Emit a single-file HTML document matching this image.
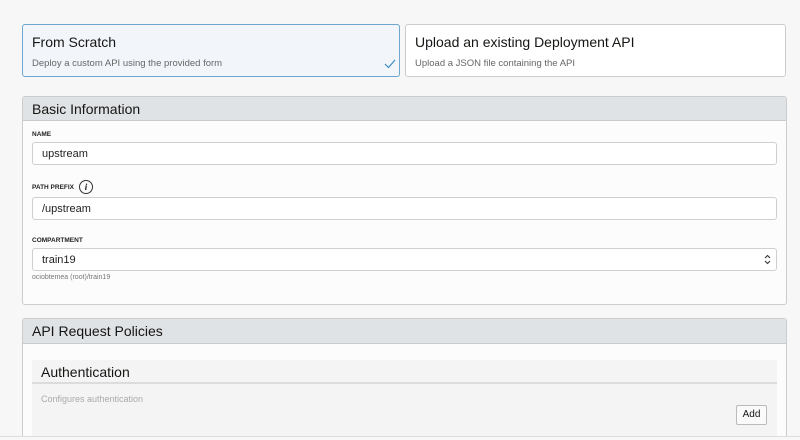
<!DOCTYPE html><html style="width:800px;height:440px;overflow:hidden"><head><style>
*{box-sizing:border-box;margin:0;padding:0}
body{width:800px;height:440px;background:#f7f7f7;font-family:"Liberation Sans",sans-serif;position:relative;overflow:hidden;color:#161513}
.a{position:absolute}
.card{border:1px solid #ccc;background:#fff;border-radius:3px}
.t{font-size:14px}
.s{font-size:9.5px;color:#666}
.lab{font-size:6.5px;font-weight:bold;color:#222}
.in{border:1px solid #cfcfcf;border-radius:3px;background:#fff;font-size:11px;padding:5px 0 0 9px;color:#222}
.hdr{background:#e0e3e5;border-bottom:1px solid #c9cccf;font-size:14px;padding:4px 0 0 9px}
</style></head><body>
<div class="a card" style="left:22px;top:24px;width:378px;height:53px;background:#f2f6fb;border-color:#6ea6cf">
 <div class="a t" style="left:9px;top:9px">From Scratch</div>
 <div class="a s" style="left:9px;top:33px">Deploy a custom API using the provided form</div>
 <svg class="a" style="left:361px;top:34px" width="12" height="10"><path d="M1 5 L4.5 8.5 L11 1" stroke="#3d8bc4" stroke-width="1.2" fill="none"/></svg>
</div>
<div class="a card" style="left:405px;top:24px;width:381px;height:53px">
 <div class="a t" style="left:9px;top:9px">Upload an existing Deployment API</div>
 <div class="a s" style="left:9px;top:33px">Upload a JSON file containing the API</div>
</div>
<div class="a card" style="left:22px;top:96px;width:765px;height:209px;overflow:hidden;background:#fcfcfc">
 <div class="hdr" style="height:24px">Basic Information</div>
 <div class="a lab" style="left:9px;top:34px">NAME</div>
 <div class="a in" style="left:9px;top:45px;width:745px;height:23px">upstream</div>
 <div class="a lab" style="left:9px;top:87px">PATH PREFIX</div>
 <div class="a" style="left:56px;top:83px;width:14px;height:14px;border:1px solid #333;border-radius:50%;font:italic bold 9px 'Liberation Serif',serif;text-align:center;line-height:12px">i</div>
 <div class="a in" style="left:9px;top:100px;width:745px;height:23px">/upstream</div>
 <div class="a lab" style="left:9px;top:140px">COMPARTMENT</div>
 <div class="a in" style="left:9px;top:151px;width:745px;height:23px">train19
  <svg class="a" style="right:5px;top:5px" width="7" height="11"><path d="M1 4 L3.5 1.5 L6 4 M1 7 L3.5 9.5 L6 7" stroke="#333" stroke-width="1.1" fill="none"/></svg></div>
 <div class="a" style="left:9px;top:177px;font-size:7px;color:#777">ociobtemea (root)/train19</div>
</div>
<div class="a card" style="left:22px;top:318px;width:765px;height:140px;overflow:hidden;background:#fcfcfc">
 <div class="hdr" style="height:25px">API Request Policies</div>
 <div class="a" style="left:9px;top:41px;width:745px;height:80px;background:#f4f4f4">
  <div style="height:24px;border-bottom:2px solid #dcdcdc;font-size:14px;padding:4px 0 0 9px">Authentication</div>
  <div class="a" style="left:9px;top:34px;font-size:9px;color:#aaa">Configures authentication</div>
  <div class="a" style="left:704px;top:45px;width:31px;height:20px;border:1px solid #bbb;border-radius:2px;background:#fafafa;font-size:10px;text-align:center;line-height:18px">Add</div>
 </div>
</div>
<div class="a" style="left:0;top:436px;width:800px;height:4px;background:#f7f7f7;border-top:1px solid #ddd"></div>
</body></html>
